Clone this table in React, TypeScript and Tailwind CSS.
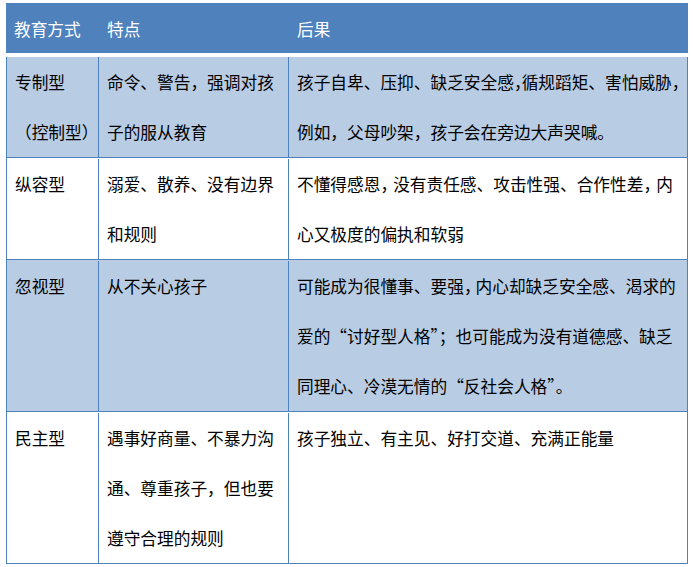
import React from "react";

const C = ({ w }: { w: string }) => <span className={w}>，</span>;

type Row = { bg: string; c1: React.ReactNode[]; c2: React.ReactNode[]; c3: React.ReactNode[] };

const rows: Row[] = [
  {
    bg: "bg-[#b8cce4]",
    c1: ["专制型", "（控制型）"],
    c2: ["命令、警告，强调对孩", "子的服从教育"],
    c3: [
      <>孩子自卑、压抑、缺乏安全感<C w="tracking-[-9px]" />循规蹈矩、害怕威胁<C w="tracking-[-9px]" /></>,
      "例如，父母吵架，孩子会在旁边大声哭喊。",
    ],
  },
  {
    bg: "bg-white",
    c1: ["纵容型"],
    c2: ["溺爱、散养、没有边界", "和规则"],
    c3: [
      <>不懂得感恩<C w="tracking-[-4px]" />没有责任感、攻击性强、合作性差<C w="tracking-[-4px]" />内</>,
      "心又极度的偏执和软弱",
    ],
  },
  {
    bg: "bg-[#b8cce4]",
    c1: ["忽视型"],
    c2: ["从不关心孩子"],
    c3: [
      <>可能成为很懂事、要强<C w="tracking-[-5px]" />内心却缺乏安全感、渴求的</>,
      "爱的“讨好型人格”；也可能成为没有道德感、缺乏",
      "同理心、冷漠无情的“反社会人格”。",
    ],
  },
  {
    bg: "bg-white",
    c1: ["民主型"],
    c2: ["遇事好商量、不暴力沟", "通、尊重孩子，但也要", "遵守合理的规则"],
    c3: ["孩子独立、有主见、好打交道、充满正能量"],
  },
];

const Lines = ({ items }: { items: React.ReactNode[] }) => (
  <div className="flex flex-col">
    {items.map((t, i) => (
      <div key={i} className="h-[50px] leading-[50px] whitespace-nowrap">
        {t}
      </div>
    ))}
  </div>
);

export default function App() {
  return (
    <div
      className="w-[693px] h-[567px] bg-white pt-[3px] pl-[6px] text-[16.7px] text-black"
      style={{ fontFamily: '"Noto Sans CJK SC", "Microsoft YaHei", sans-serif' }}
    >
      <div className="w-[682px] flex flex-col">
        <div className="h-[50px] bg-[#4f81bd] grid grid-cols-[93px_190px_399px] items-center text-white">
          <div className="pl-[8px] pt-[4px]">教育方式</div>
          <div className="pl-[8px] pt-[4px]">特点</div>
          <div className="pl-[8px] pt-[4px]">后果</div>
        </div>
        <div className="h-[4px] bg-white" />
        {rows.map((r, i) => (
          <div
            key={i}
            className={`grid grid-cols-[92px_190px_398px] border-x border-b border-[#4f81bd] ${r.bg} ${i > 0 ? "pt-[1px]" : ""}`}
          >
            <div className="pl-[8px] border-r border-[#4f81bd]">
              <Lines items={r.c1} />
            </div>
            <div className="pl-[8px] border-r border-[#4f81bd]">
              <Lines items={r.c2} />
            </div>
            <div className="pl-[8px]">
              <Lines items={r.c3} />
            </div>
          </div>
        ))}
      </div>
    </div>
  );
}
